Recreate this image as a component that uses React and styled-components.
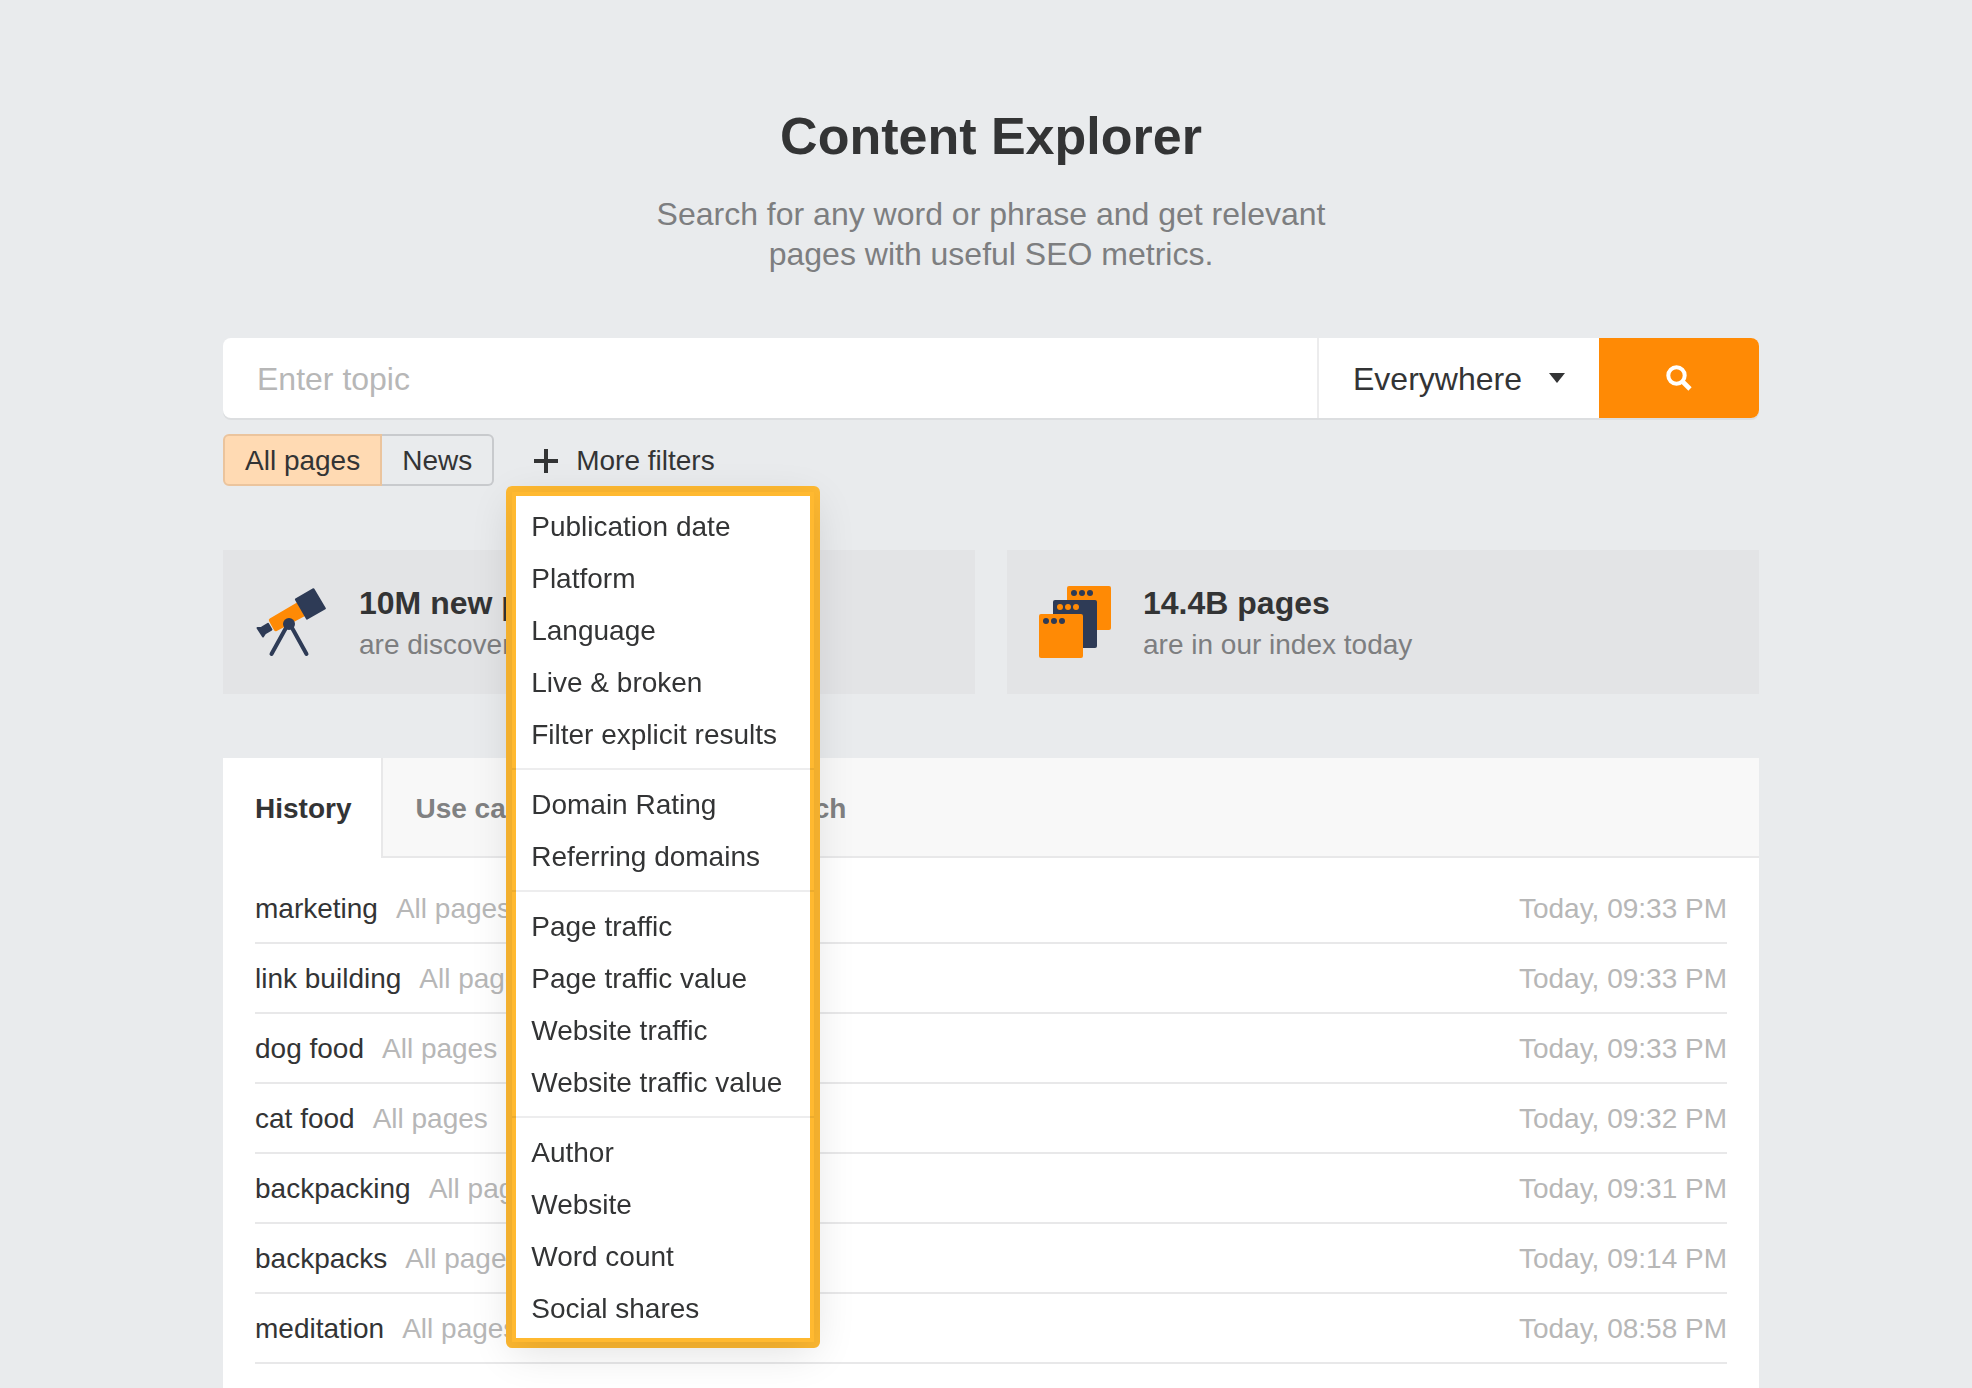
import React, { useState } from 'react';
import styled, { createGlobalStyle } from "styled-components";

const GlobalStyle = createGlobalStyle`
  * {
    box-sizing: border-box;
  }
  body {
    margin: 0;
    background-color: #e9ebed;
    color: #333435;
    font-family: "Liberation Sans", Arial, Helvetica, sans-serif;
    font-size: 28px;
  }
  button, input, select {
    font: inherit;
    color: inherit;
  }
  button {
    cursor: pointer;
  }
`;

const Page = styled.main`
  min-height: 100vh;
  padding: 108px 213px 0 223px;
  display: flex;
  flex-direction: column;
`;

const Header = styled.header`
  text-align: center;
  margin-bottom: 64px;
`;
const Title = styled.h1`
  margin: 0 0 30px;
  font-size: 52px;
  line-height: 56px;
`;
const Subtitle = styled.p`
  max-width: 700px;
  margin: 0 auto;
  font-size: 32px;
  line-height: 40px;
  color: #7d7e80;
`;

const SearchForm = styled.form`
  display: flex;
  height: 80px;
  font-size: 32px;
  background-color: white;
  border-radius: 8px;
  box-shadow: 0 2px 0 #dcdee0;
`;
const TopicInput = styled.input`
  flex: 1;
  min-width: 0;
  padding: 2px 34px 0;
  border: none;
  background: none;
  outline: none;

  &::placeholder {
    color: #b7b7b7;
    opacity: 1;
  }
`;
const SelectBox = styled.div`
  display: grid;
  width: 282px;
  align-items: center;
  border-left: 2px solid #ececed;

  & > * {
    grid-area: 1 / 1;
  }
  svg {
    justify-self: end;
    margin-right: 34px;
    pointer-events: none;
  }
`;
const ScopeSelect = styled.select`
  height: 80px;
  padding: 2px 34px 0;
  border: none;
  background: none;
  appearance: none;
  outline: none;
`;
const SearchButton = styled.button`
  display: flex;
  width: 160px;
  align-items: center;
  justify-content: center;
  border: none;
  border-radius: 0 8px 8px 0;
  background-color: #ff8a05;
`;

const Filters = styled.div`
  display: flex;
  gap: 18px;
  margin: 16px 0 64px;
`;
const Segments = styled.div`
  display: flex;
  height: 52px;
`;
const Segment = styled.button`
  padding: 2px 20px 0;
  border: 2px solid ${(props) => (props.$active ? "#ebc49d" : "#c8cacd")};
  background-color: ${(props) => (props.$active ? "#ffdab3" : "transparent")};

  &:first-child {
    border-radius: 6px 0 0 6px;
  }
  &:last-child {
    border-left: none;
    border-radius: 0 6px 6px 0;
  }
`;
const MoreFilters = styled.div`
  position: relative;
`;
const MoreButton = styled.button`
  display: flex;
  height: 52px;
  align-items: center;
  gap: 18px;
  padding: 2px 22px 0;
  border: none;
  background: none;
`;

const Menu = styled.div`
  position: absolute;
  z-index: 1;
  top: calc(100% + 6px);
  left: 0;
  width: 302px;
  background-color: white;
  box-shadow: 0 10px 40px rgba(0, 0, 0, 0.12);

  &::after {
    content: "";
    position: absolute;
    inset: -6px;
    border: 10px solid #ffb930;
    border-radius: 6px;
    mix-blend-mode: multiply;
    pointer-events: none;
  }
`;
const MenuGroup = styled.div`
  padding: 8px 0;

  & + & {
    border-top: 2px solid #ededee;
  }
`;
const MenuItem = styled.button`
  display: block;
  width: 100%;
  height: 52px;
  padding: 2px 19px 0;
  border: none;
  background: none;
  text-align: left;
  white-space: nowrap;
`;

const Cards = styled.section`
  display: grid;
  grid-template-columns: 1fr 1fr;
  gap: 32px;
  margin-bottom: 64px;
`;
const Card = styled.article`
  display: flex;
  height: 144px;
  align-items: center;
  gap: 32px;
  padding: 0 32px;
  background-color: #e3e4e6;
`;
const CardBody = styled.div`
  padding-top: 4px;
`;
const CardTitle = styled.h2`
  margin: 0 0 2px;
  font-size: 32px;
  line-height: 40px;
`;
const CardText = styled.p`
  margin: 0;
  line-height: 40px;
  color: #7d7e80;
`;

const Panel = styled.section`
  flex: 1;
  background-color: white;
`;
const Tabs = styled.div`
  display: flex;
  height: 100px;
  background-color: #f8f8f8;
  border-bottom: 2px solid #e8e8e9;
`;
const Tab = styled.button`
  padding: 4px 30px 0 32px;
  border: none;
  background: none;
  font-weight: bold;
  color: #808182;

  ${(props) => props.$active && `
    height: 100px;
    padding-top: 2px;
    border-right: 2px solid #e8e8e9;
    background-color: white;
    color: #333435;
  `}
`;
const History = styled.ul`
  margin: 0;
  padding: 16px 32px 0;
  list-style: none;
`;
const HistoryRow = styled.li`
  display: flex;
  height: 70px;
  align-items: center;
  gap: 18px;
  padding-top: 2px;
  border-bottom: 2px solid #e8e8e9;
  color: #b7b7b7;
`;
const Topic = styled.a`
  color: #333435;
  text-decoration: none;
`;
const Time = styled.time`
  margin-left: auto;
`;

const menuGroups = [
  ["Publication date", "Platform", "Language", "Live & broken", "Filter explicit results"],
  ["Domain Rating", "Referring domains"],
  ["Page traffic", "Page traffic value", "Website traffic", "Website traffic value"],
  ["Author", "Website", "Word count", "Social shares"],
];

const searches = [
  { topic: "marketing", time: "09:33 PM" },
  { topic: "link building", time: "09:33 PM" },
  { topic: "dog food", time: "09:33 PM" },
  { topic: "cat food", time: "09:32 PM" },
  { topic: "backpacking", time: "09:31 PM" },
  { topic: "backpacks", time: "09:14 PM" },
  { topic: "meditation", time: "08:58 PM" },
];

const CaretIcon = () => (
  <svg width="16" height="10" viewBox="0 0 16 10" aria-hidden="true">
    <path d="M0 0h16L8 10z" fill="#333435" />
  </svg>
);

const SearchIcon = () => (
  <svg width="26" height="26" viewBox="0 0 26 26" fill="none" stroke="white" strokeWidth="4" aria-hidden="true">
    <circle cx="10.5" cy="10.5" r="8.2" />
    <path d="M16 16l8 8" strokeWidth="4.6" />
  </svg>
);

const PlusIcon = () => (
  <svg width="24" height="24" viewBox="0 0 24 24" aria-hidden="true">
    <path d="M10 0h4v10h10v4H14v10h-4V14H0v-4h10z" fill="#333435" />
  </svg>
);

const TelescopeIcon = () => (
  <svg width="72" height="72" viewBox="0 0 72 72" aria-hidden="true">
    <g stroke="#2e3b56" strokeWidth="4" strokeLinecap="round">
      <path d="M32 40L16.5 68M36 40l15.5 28" />
    </g>
    <path d="M42 16.5L14.8 32.6a2 2 0 0 0-.7 2.7l5 9a2 2 0 0 0 2.7.7L50 30z" fill="#ff8a05" />
    <g fill="#2e3b56" stroke="#2e3b56" strokeWidth="2" strokeLinejoin="round">
      <path d="M58.5 3.2l11.4 19.2-18 10.2L40.9 13.4z" />
      <path d="M13 37.8l3.4 5.8-6.4 3.8-2 3L2.5 42l4.2-.3z" />
    </g>
    <circle cx="34" cy="38" r="6" fill="#2e3b56" />
  </svg>
);

const PagesIcon = () => (
  <svg width="72" height="72" viewBox="0 0 72 72" aria-hidden="true">
    <rect x="28" width="44" height="44" rx="2" fill="#ff8a05" />
    <g fill="#2e3b56">
      <circle cx="35" cy="7" r="3" />
      <circle cx="43" cy="7" r="3" />
      <circle cx="51" cy="7" r="3" />
      <rect x="14" y="14" width="44" height="48" rx="2" />
    </g>
    <g fill="#ff8a05">
      <circle cx="21" cy="21" r="3" />
      <circle cx="29" cy="21" r="3" />
      <circle cx="37" cy="21" r="3" />
      <rect y="28" width="44" height="44" rx="2" />
    </g>
    <g fill="#2e3b56">
      <circle cx="7" cy="35" r="3" />
      <circle cx="15" cy="35" r="3" />
      <circle cx="23" cy="35" r="3" />
    </g>
  </svg>
);

const App = () => {
  const [type, setType] = useState("All pages");
  const [menuOpen, setMenuOpen] = useState(true);
  const [tab, setTab] = useState("History");

  return (
    <Page>
      <GlobalStyle />
      <Header>
        <Title>Content Explorer</Title>
        <Subtitle>Search for any word or phrase and get relevant pages with useful SEO metrics.</Subtitle>
      </Header>

      <SearchForm onSubmit={(e) => e.preventDefault()}>
        <TopicInput type="text" placeholder="Enter topic" aria-label="Topic" />
        <SelectBox>
          <ScopeSelect aria-label="Search in">
            <option>Everywhere</option>
            <option>In title</option>
            <option>In content</option>
          </ScopeSelect>
          <CaretIcon />
        </SelectBox>
        <SearchButton type="submit" aria-label="Search">
          <SearchIcon />
        </SearchButton>
      </SearchForm>

      <Filters>
        <Segments>
          {["All pages", "News"].map((name) => (
            <Segment key={name} type="button" $active={type === name} onClick={() => setType(name)}>
              {name}
            </Segment>
          ))}
        </Segments>
        <MoreFilters>
          <MoreButton type="button" aria-expanded={menuOpen} onClick={() => setMenuOpen(!menuOpen)}>
            <PlusIcon />
            More filters
          </MoreButton>
          {menuOpen && (
            <Menu>
              {menuGroups.map((group) => (
                <MenuGroup key={group[0]}>
                  {group.map((item) => (
                    <MenuItem key={item} type="button">{item}</MenuItem>
                  ))}
                </MenuGroup>
              ))}
            </Menu>
          )}
        </MoreFilters>
      </Filters>

      <Cards>
        <Card>
          <TelescopeIcon />
          <CardBody>
            <CardTitle>10M new pages</CardTitle>
            <CardText>are discovered daily</CardText>
          </CardBody>
        </Card>
        <Card>
          <PagesIcon />
          <CardBody>
            <CardTitle>14.4B pages</CardTitle>
            <CardText>are in our index today</CardText>
          </CardBody>
        </Card>
      </Cards>

      <Panel>
        <Tabs>
          {["History", "Use cases", "Advanced search"].map((name) => (
            <Tab key={name} type="button" $active={tab === name} onClick={() => setTab(name)}>
              {name}
            </Tab>
          ))}
        </Tabs>
        <History>
          {searches.map(({ topic, time }) => (
            <HistoryRow key={topic}>
              <Topic href="#">{topic}</Topic>
              <span>All pages</span>
              <Time>Today, {time}</Time>
            </HistoryRow>
          ))}
        </History>
      </Panel>
    </Page>
  );
};

export default App;
